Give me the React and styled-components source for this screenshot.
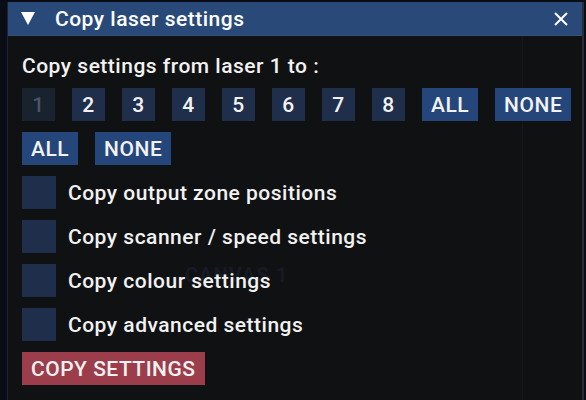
import styled, { createGlobalStyle } from 'styled-components';

const GlobalStyle = createGlobalStyle`
  html, body {
    margin: 0;
    padding: 0;
    background: #0a0d16;
    font-family: Roboto, "Liberation Sans", sans-serif;
  }
`;

const Page = styled.div`
  width: 586px;
  height: 400px;
  padding: 2px 2px 0 7px;
  box-sizing: border-box;
  overflow: hidden;
`;

const Window = styled.div`
  position: relative;
  height: 100%;
  background: #101113;
  border-left: 1px solid #1c2230;
  border-right: 2px solid #2a2d33;
  display: flex;
  flex-direction: column;
`;

const TitleBar = styled.div`
  height: 33px;
  background: #294a79;
  border-bottom: 1px solid #34507a;
  display: flex;
  align-items: center;
  padding: 0 14px 0 13px;
  color: #ffffff;
  font-size: 21px;
  font-weight: 500;
  letter-spacing: 0.5px;
`;

const Arrow = styled.span`
  width: 0;
  height: 0;
  border-left: 7px solid transparent;
  border-right: 7px solid transparent;
  border-top: 13px solid #ffffff;
  margin-right: 20px;
`;

const Title = styled.span`
  flex: 1;
`;

const Body = styled.div`
  position: relative;
  padding: 18px 14px 0 14px;
  display: flex;
  flex-direction: column;
  gap: 11px;
  font-size: 21px;
  font-weight: 500;
  letter-spacing: 0.5px;
`;

const Label = styled.div`
  color: #f2f2f2;
  line-height: 24px;
  margin-bottom: -1px;
  position: relative;
`;

const Row = styled.div`
  display: flex;
  gap: 17px;
  position: relative;
`;

const Btn = styled.div`
  height: 33px;
  min-width: ${(p) => (p.square ? '33px' : 'auto')};
  padding: ${(p) => (p.square ? '0' : '0 9px')};
  box-sizing: border-box;
  display: flex;
  align-items: center;
  justify-content: center;
  color: ${(p) => (p.disabled ? '#4c5563' : '#f2f2f2')};
  background: ${(p) => (p.disabled ? '#19222f' : p.accent ? '#24467a' : '#1f2f4b')};
`;

const CheckRow = styled.div`
  display: flex;
  align-items: center;
  gap: 12px;
  position: relative;
`;

const Box = styled.div`
  width: 34px;
  height: 33px;
  background: #1f2f4b;
`;

const CheckText = styled.span`
  color: #f2f2f2;
`;

const CopyButton = styled.div`
  align-self: flex-start;
  height: 33px;
  padding: 0 9px;
  display: flex;
  align-items: center;
  background: #9b3d4a;
  color: #f2f2f2;
  position: relative;
`;

const Watermark = styled.div`
  position: absolute;
  left: 177px;
  top: 227px;
  font-size: 20px;
  font-weight: 700;
  color: #151b25;
  letter-spacing: 1px;
`;

const Divider = styled.div`
  position: absolute;
  top: 35px;
  bottom: 0;
  left: 514px;
  width: 1px;
  background: #15181d;
`;

const Close = () => (
  <svg width="14" height="14" viewBox="0 0 14 14">
    <path d="M1 1 L13 13 M13 1 L1 13" stroke="#ffffff" strokeWidth="2" />
  </svg>
);

const App = () => (
  <Page>
    <GlobalStyle />
    <Window>
      <TitleBar>
        <Arrow />
        <Title>Copy laser settings</Title>
        <Close />
      </TitleBar>
      <Divider />
      <Body>
        <Watermark>CANVAS 1</Watermark>
        <Label>Copy settings from laser 1 to :</Label>
        <Row>
          {[1, 2, 3, 4, 5, 6, 7, 8].map((n) => (
            <Btn key={n} square disabled={n === 1}>{n}</Btn>
          ))}
          <Btn accent>ALL</Btn>
          <Btn accent>NONE</Btn>
        </Row>
        <Row>
          <Btn accent>ALL</Btn>
          <Btn accent>NONE</Btn>
        </Row>
        {['Copy output zone positions', 'Copy scanner / speed settings', 'Copy colour settings', 'Copy advanced settings'].map((t) => (
          <CheckRow key={t}>
            <Box />
            <CheckText>{t}</CheckText>
          </CheckRow>
        ))}
        <CopyButton>COPY SETTINGS</CopyButton>
      </Body>
    </Window>
  </Page>
);

export default App;
